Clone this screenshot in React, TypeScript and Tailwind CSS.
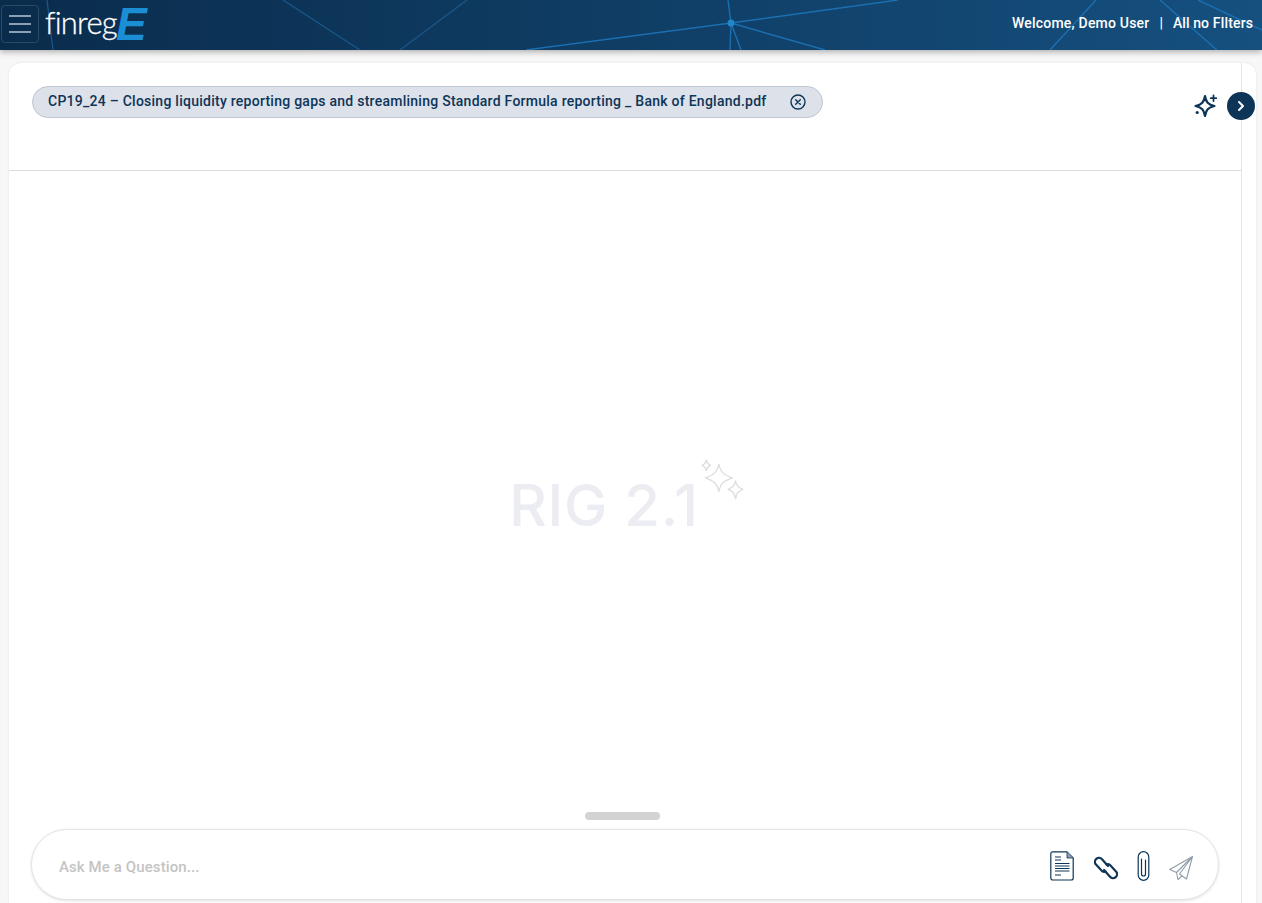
import React from 'react';
import { ChevronRight } from 'lucide-react';

const HeaderLines = () => (
  <svg className="absolute inset-0 w-full h-full" viewBox="0 0 1262 50" fill="none">
    <g stroke="#1c6fb0" strokeWidth="1.4">
      <path d="M526 50 L731 23 L898 0" />
      <path d="M728 0 L731 23" />
      <path d="M731 23 L825 50" />
      <path d="M731 23 L730 50" />
      <path d="M731 23 L741 50" />
      <path d="M1096 0 L1050 50" />
      <path d="M1160 0 L1217 50" />
      <path d="M1198 0 L1262 30" />
    </g>
    <g stroke="#1a5688" strokeWidth="1.3">
      <path d="M283 0 L360 50" />
      <path d="M467 0 L400 50" />
      <path d="M47 0 L53 50" />
    </g>
    <circle cx="731" cy="23" r="3.5" fill="#1f86c9" />
  </svg>
);

const Stars = () => (
  <svg width="48" height="46" viewBox="0 0 46 44" fill="none" stroke="#dddde2" strokeWidth="1.3" strokeLinejoin="round">
    <path d="M7 2 C7.6 5 8.5 6 11 7 C8.5 8 7.6 9 7 12 C6.4 9 5.5 8 3 7 C5.5 6 6.4 5 7 2 Z" />
    <path d="M19 6 C20.5 13 23 16 32 19 C23 22 20.5 25 19 32 C17.5 25 15 22 6 19 C15 16 17.5 13 19 6 Z" />
    <path d="M35 22 C36 26.5 37.5 28 42 30 C37.5 32 36 33.5 35 39 C34 33.5 32.5 32 28 30 C32.5 28 34 26.5 35 22 Z" />
  </svg>
);

const SparkleIcon = () => (
  <svg width="24" height="24" viewBox="0 0 24 24" fill="none" stroke="#0d3558" strokeWidth="2.2" strokeLinejoin="round">
    <path d="M11 2 C12 8 14 10.5 20.5 12 C14 13.5 12 16 11 22 C10 16 8 13.5 1.5 12 C8 10.5 10 8 11 2 Z" />
    <path d="M19.5 1.5 V7 M16.8 4.2 H22.2" strokeLinecap="round" strokeWidth="1.8" />
    <circle cx="3.2" cy="18.5" r="1.6" fill="#0d3558" stroke="none" />
  </svg>
);

const DocIcon = () => (
  <svg width="24" height="30" viewBox="0 0 24 30" fill="none" stroke="#0d3558" strokeWidth="1.2" strokeLinejoin="round">
    <path d="M3 0.8 H17 L23.2 7 V27 A2 2 0 0 1 21.2 29 H3 A2 2 0 0 1 0.8 27 V3 A2 2 0 0 1 3 0.8 Z" />
    <path d="M17 0.8 V7 H23.2" fill="#8ea0b2" strokeWidth="0.8" />
    <path d="M5 6 H11 M5 9 H11 M5 12.5 H19.5 M5 15 H19.5 M5 17.5 H19.5 M5 20 H19.5 M5 24 H11" strokeWidth="1.1" />
  </svg>
);

const LinkIcon = () => (
  <svg width="24" height="24" viewBox="0 0 24 24" fill="none" stroke="#0d3558" strokeWidth="2.2" strokeLinecap="round">
    <path d="M14 10 L8 3.2 A3.9 3.9 0 0 0 2 8.6 L8.4 15.4 A3.4 3.4 0 0 0 11.6 15.6" />
    <path d="M10 14 L16 20.8 A3.9 3.9 0 0 0 22 15.4 L15.6 8.6 A3.4 3.4 0 0 0 12.4 8.4" />
  </svg>
);

const ClipIcon = () => (
  <svg width="13" height="30" viewBox="0 0 13 30" fill="none" stroke="#0d3558" strokeWidth="1.2" strokeLinecap="round">
    <path d="M1.2 24 V6 A5.3 5.3 0 0 1 11.8 6 V24 A5.3 5.3 0 0 1 1.2 24 Z" />
    <path d="M4.5 8 V23 A2 2 0 0 0 8.5 23 V9" />
  </svg>
);

const SendIcon = () => (
  <svg width="24" height="24" viewBox="0 0 24 24" fill="none" stroke="#8f9cab" strokeWidth="1.1" strokeLinejoin="round">
    <path d="M23.5 0.5 L0.8 13.5 L7.5 16.5 L23.5 0.5 L10.5 18 L17.5 23 L23.5 0.5 Z" />
    <path d="M7.5 16.5 L9 23.5 L13 20" />
  </svg>
);

export default function App() {
  return (
    <div className="h-[903px] w-[1262px] overflow-hidden flex flex-col bg-[#f7f7f7] font-['Roboto',sans-serif]">
      {/* Header */}
      <header className="relative h-[50px] shrink-0 flex items-center justify-between bg-gradient-to-r from-[#0a2c4c] to-[#15507f] shadow-[0_2px_6px_rgba(0,0,0,0.3)] z-10">
        <HeaderLines />
        <div className="relative flex items-center pl-[1px]">
          <button className="w-[38px] h-[38px] -mt-[2px] rounded border border-[#2a4a66] flex flex-col items-center justify-center gap-[6px]">
            <span className="block w-[22px] h-[2px] bg-[#8aa0b3]" />
            <span className="block w-[22px] h-[2px] bg-[#8aa0b3]" />
            <span className="block w-[22px] h-[2px] bg-[#8aa0b3]" />
          </button>
          <div className="flex items-center ml-[6px] h-[50px]">
            <span className="font-['Lato',sans-serif] font-light [-webkit-text-stroke:0.3px_#fff] text-[31px] leading-none text-white -mt-[6px] tracking-[-0.8px]">finreg</span>
            <svg width="34" height="50" viewBox="0 0 34 50" className="overflow-visible">
              <text x="-1" y="40" fontFamily="'Liberation Sans', sans-serif" fontStyle="italic" fontWeight="700" fontSize="46" fill="#1b8fd6">E</text>
            </svg>
          </div>
        </div>
        <div className="relative flex items-center text-white text-sm font-medium pr-[9px] -mt-[4px]">
          <span className="tracking-[0.2px]">Welcome, Demo User</span>
          <span className="mx-[10px]">|</span>
          <span className="tracking-[0.1px]">All no FIlters</span>
        </div>
      </header>

      {/* Card */}
      <main className="relative flex-1 mt-[13px] ml-[9px] mr-[6px] min-h-0 bg-white rounded-t-xl shadow-[0_0_3px_rgba(0,0,0,0.08)] flex">
        <div className="flex-1 min-w-0 flex flex-col border-r border-[#e4e4e4]">
          <div className="h-[108px] shrink-0 border-b border-[#dcdcdc] pt-[23px] pl-[23px] pr-[23px] flex items-start justify-between">
            <div className="h-[32px] w-[791px] flex items-center justify-between rounded-full bg-[#dde1e9] border border-[#bfc7d3] pl-[15px] pr-[16px] text-sm font-medium tracking-[0.255px] text-[#0d3558]">
              <span className="whitespace-nowrap -mt-[2px]">CP19_24 – Closing liquidity reporting gaps and streamlining Standard Formula reporting _ Bank of England.pdf</span>
              <svg width="16" height="16" viewBox="0 0 16 16" fill="none" stroke="#0d3558" strokeWidth="1.4" strokeLinecap="round">
                <circle cx="8" cy="8" r="7" />
                <path d="M5.7 5.7 L10.3 10.3 M10.3 5.7 L5.7 10.3" />
              </svg>
            </div>
            <div className="mt-[8px]">
              <SparkleIcon />
            </div>
          </div>

          <div className="flex-1 flex items-center justify-center min-h-0">
            <div className="relative flex items-end mt-[27px] -ml-[42px]">
              <span className="font-['Inter',sans-serif] font-medium text-[58px] leading-none text-[#ecedf2] tracking-[0.7px]">RIG 2.1</span>
              <span className="absolute left-[190px] -top-[18px]">
                <Stars />
              </span>
            </div>
          </div>

          <div className="flex justify-center mb-[9px] pr-[6px]">
            <span className="block w-[75px] h-[8px] rounded-full bg-[#d3d3d3]" />
          </div>

          <div className="mx-[22px] mb-[3px] h-[71px] rounded-full border border-[#e4e4e4] bg-white shadow-[0_1px_3px_rgba(0,0,0,0.12)] flex items-center justify-between pl-[27px] pr-[25px]">
            <span className="text-[15px] tracking-[0.1px] font-medium text-[#c4c4c4] mt-[6px]">Ask Me a Question...</span>
            <div className="flex items-center gap-[19px] mt-[2px]">
              <DocIcon />
              <span className="mt-[5px] ml-[1px]"><LinkIcon /></span>
              <ClipIcon />
              <span className="mt-[5px]"><SendIcon /></span>
            </div>
          </div>
        </div>
        <div className="w-[14px] shrink-0" />

        {/* Collapse toggle sits over the panel divider */}
        <button className="absolute left-[1218px] top-[29px] w-[28px] h-[28px] rounded-full bg-[#0d3558] flex items-center justify-center">
          <ChevronRight size={16} strokeWidth={3} color="white" />
        </button>
      </main>
    </div>
  );
}
